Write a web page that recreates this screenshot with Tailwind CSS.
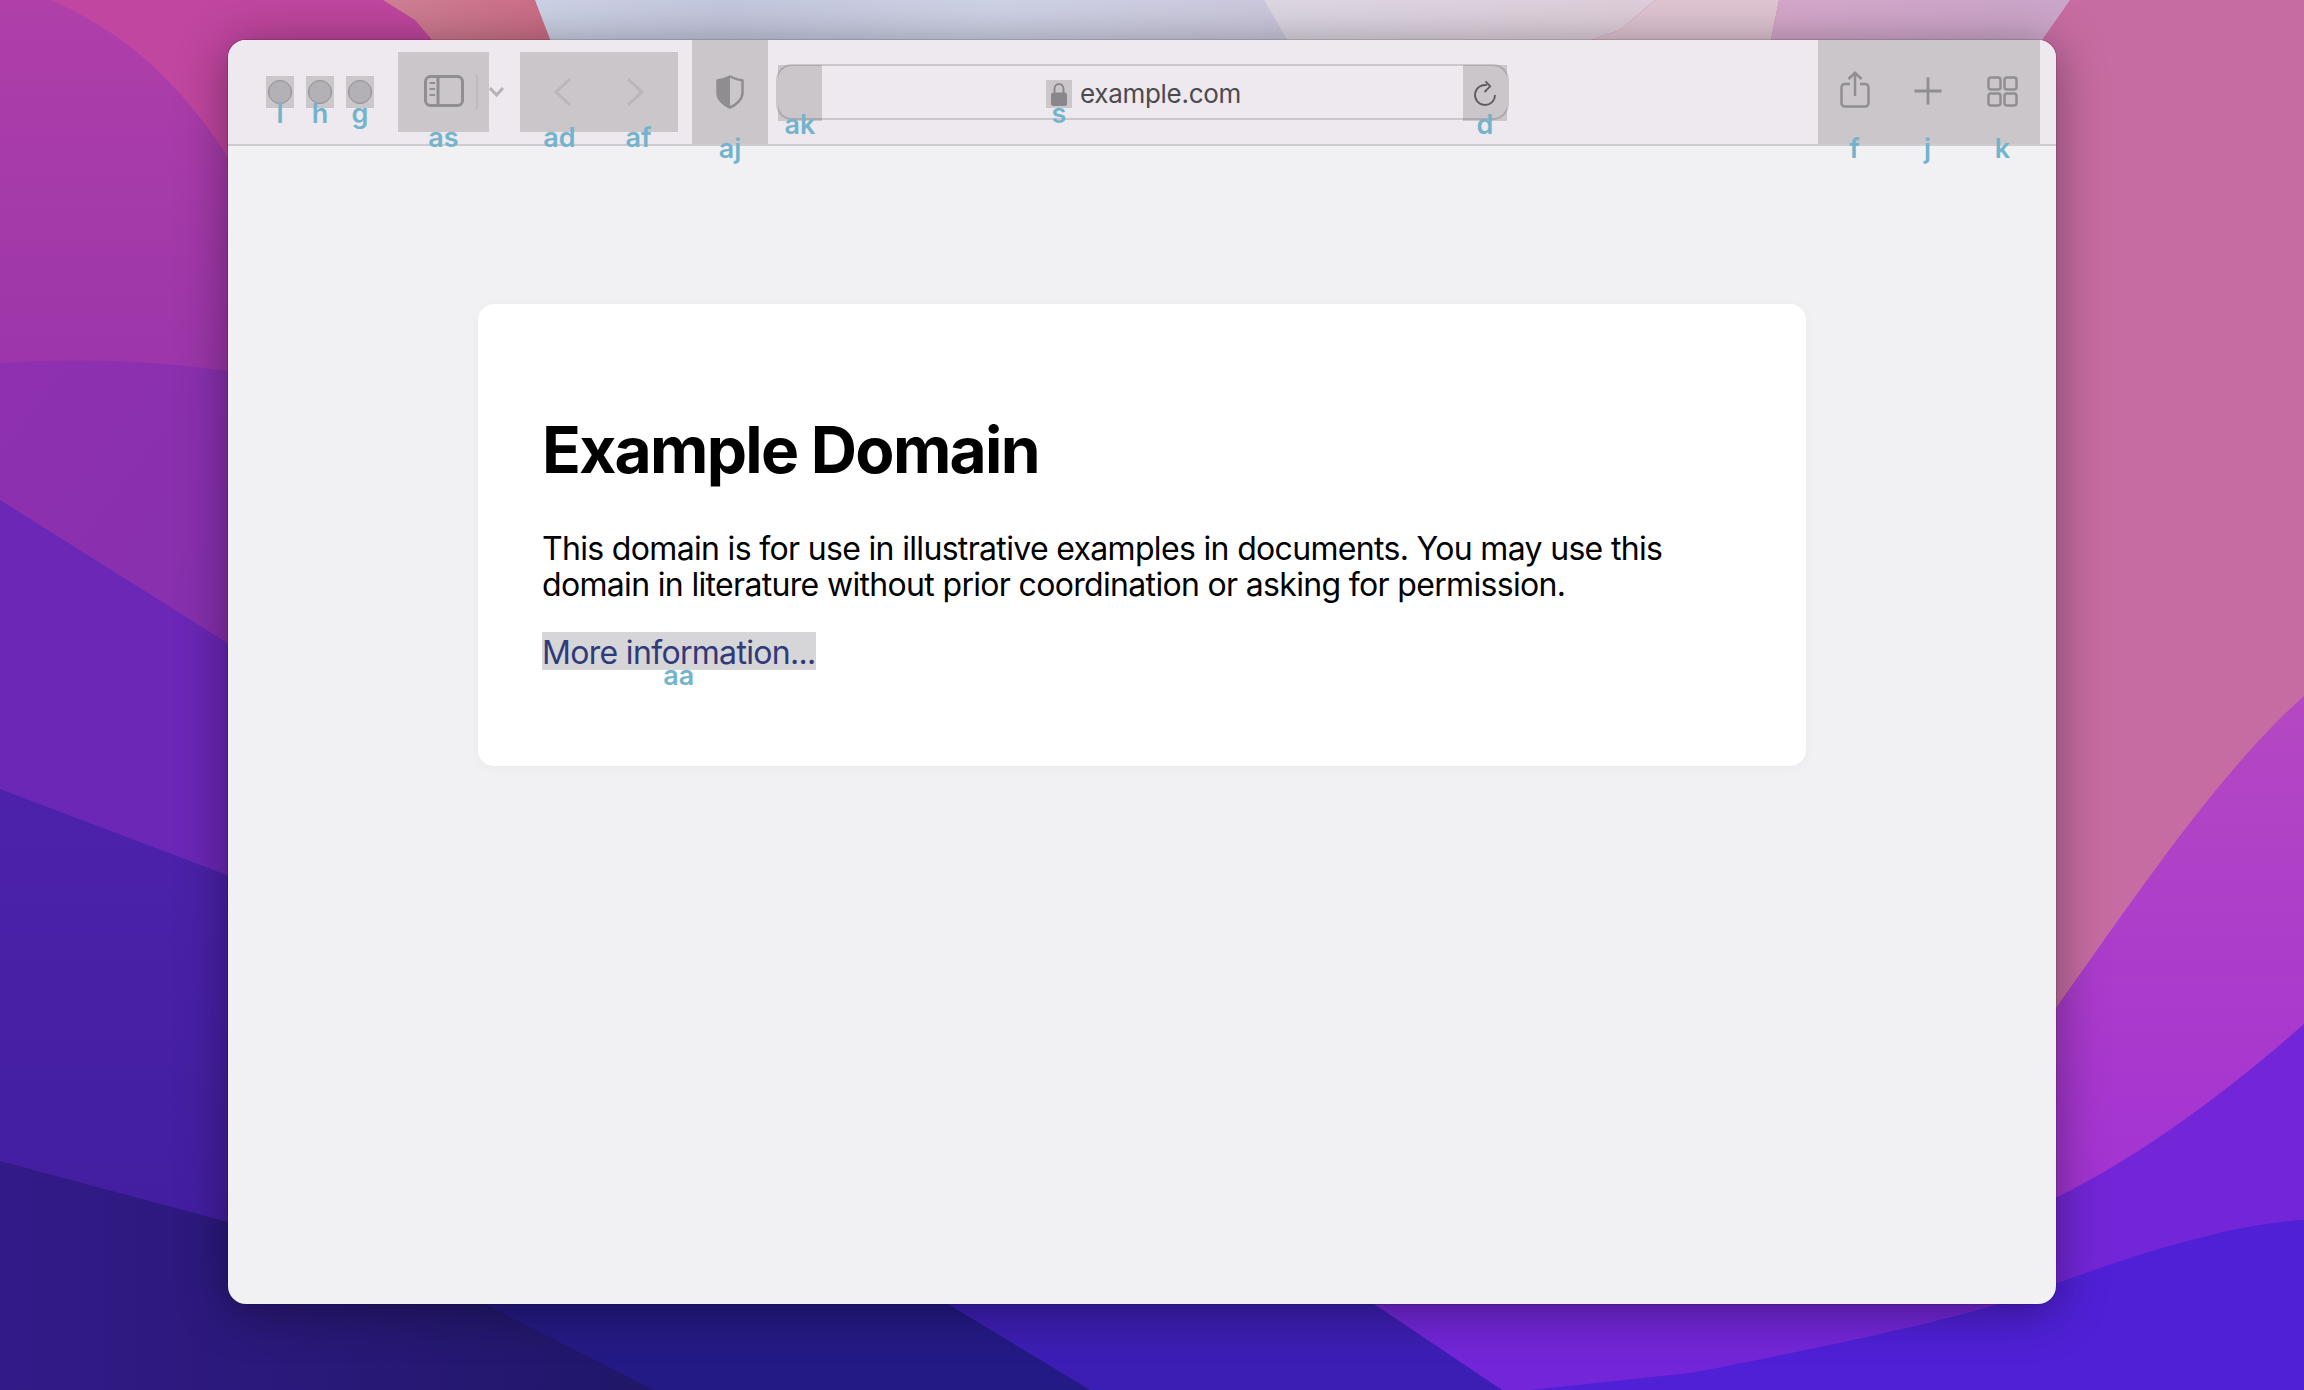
<!DOCTYPE html>
<html>
<head>
<meta charset="utf-8">
<script src="https://cdn.jsdelivr.net/npm/@tailwindcss/browser@4"></script>
</head>
<body class="relative w-[2304px] h-[1390px] overflow-hidden font-['Inter',sans-serif]">
<svg class="absolute inset-0 w-[2304px] h-[1390px]" viewBox="0 0 2304 1390">
  <defs>
    <linearGradient id="b1" x1="0" y1="0" x2="0" y2="1"><stop offset="0" stop-color="#b03fa9"/><stop offset="0.85" stop-color="#9c36aa"/><stop offset="1" stop-color="#9a36ac"/></linearGradient>
    <linearGradient id="b2" x1="0" y1="0" x2="1" y2="1"><stop offset="0" stop-color="#8f30b0"/><stop offset="1" stop-color="#8530ae"/></linearGradient>
    <linearGradient id="b4" x1="0" y1="0" x2="0" y2="1"><stop offset="0" stop-color="#4c22aa"/><stop offset="1" stop-color="#421ea0"/></linearGradient>
    <linearGradient id="b5" x1="0" y1="0" x2="1" y2="0"><stop offset="0" stop-color="#331a88"/><stop offset="1" stop-color="#1f1768"/></linearGradient>
    <linearGradient id="r1" x1="0" y1="0" x2="0" y2="1"><stop offset="0" stop-color="#b548c2"/><stop offset="0.6" stop-color="#a636d0"/><stop offset="1" stop-color="#9830d8"/></linearGradient>
    <linearGradient id="t1" x1="0" y1="0" x2="1" y2="0"><stop offset="0" stop-color="#cdd2e6"/><stop offset="0.25" stop-color="#c4c8df"/><stop offset="0.6" stop-color="#cfd3e6"/><stop offset="1" stop-color="#cdc8dd"/></linearGradient>
    <linearGradient id="t2" x1="0" y1="0" x2="1" y2="0"><stop offset="0" stop-color="#d08095"/><stop offset="1" stop-color="#cb6c85"/></linearGradient>
    <linearGradient id="t3" x1="0" y1="0" x2="1" y2="0"><stop offset="0" stop-color="#ded8e4"/><stop offset="1" stop-color="#dfcedb"/></linearGradient>
    <linearGradient id="t4" x1="0" y1="0" x2="1" y2="0"><stop offset="0" stop-color="#d6a8cb"/><stop offset="1" stop-color="#cba6cb"/></linearGradient>
  </defs>
  <rect width="2304" height="1390" fill="#c76ca2"/>
  <rect width="460" height="400" fill="#c0469f"/>
  <path d="M50 0C100 22 170 60 240 176L240 420L0 420L0 0Z" fill="url(#b1)"/>
  <path d="M0 363C80 358 160 360 240 373L240 680L0 680Z" fill="url(#b2)"/>
  <path d="M0 500L240 651L240 900L0 900Z" fill="#6b27b6"/>
  <path d="M0 789L240 880L240 1240L0 1240Z" fill="url(#b4)"/>
  <path d="M2304 696C2210 780 2120 920 2040 1030L1300 1250L1300 1390L2304 1390Z" fill="url(#r1)"/>
  <path d="M2304 1024C2230 1090 2130 1165 2040 1205L1300 1250L1300 1390L2304 1390Z" fill="#7326d8"/>
  <path d="M800 1200L1340 1200L1374 1304L1502 1390L800 1390Z" fill="#3d1eb4"/>
  <path d="M300 1200L900 1200L948 1304L1090 1390L500 1390Z" fill="#241a85"/>
  <path d="M0 1161L228 1222L485 1304L654 1390L0 1390Z" fill="url(#b5)"/>
  <path d="M2304 1220C2250 1223 2175 1240 2058 1283C2013 1305 1880 1337 1690 1373L1530 1390L2304 1390Z" fill="#4f20d6"/>
  <rect x="535" width="765" height="60" fill="url(#t1)"/>
  <path d="M535 0L383 0L415 20L449 60L558 60Z" fill="url(#t2)"/>
  <path d="M1264 0L1655 0L1620 30L1534 60L1299 60Z" fill="url(#t3)"/>
  <path d="M1655 0L1779 0L1767 60L1534 60L1620 30Z" fill="#e0c5d3"/>
  <path d="M1779 0L2070 0L2028 60L1767 60Z" fill="url(#t4)"/>
</svg>

<div class="relative ml-[228px] mt-[40px] w-[1828px] h-[1264px] float-left rounded-[18px] overflow-hidden bg-[#f1f1f3] shadow-[0_0_0_1px_rgba(0,0,0,0.12),0_6px_50px_rgba(0,0,0,0.4)]">
  <div class="flex items-center h-[106px] bg-[#eee9ee] border-b-2 border-[#cfccd0] pl-[38px] pr-[16px]">
    <div class="flex gap-[12px]">
      <div class="relative w-[28px] h-[32px] bg-black/15 flex items-center justify-center"><span class="w-[24px] h-[24px] rounded-full bg-[#b3b1b5] border border-[#8f8d91]"></span><span class="absolute top-full left-1/2 -translate-x-1/2 -mt-[8px] text-[27px] font-semibold leading-none text-[#74b3cc]">l</span></div>
      <div class="relative w-[28px] h-[32px] bg-black/15 flex items-center justify-center"><span class="w-[24px] h-[24px] rounded-full bg-[#b3b1b5] border border-[#8f8d91]"></span><span class="absolute top-full left-1/2 -translate-x-1/2 -mt-[8px] text-[27px] font-semibold leading-none text-[#74b3cc]">h</span></div>
      <div class="relative w-[28px] h-[32px] bg-black/15 flex items-center justify-center"><span class="w-[24px] h-[24px] rounded-full bg-[#b3b1b5] border border-[#8f8d91]"></span><span class="absolute top-full left-1/2 -translate-x-1/2 -mt-[8px] text-[27px] font-semibold leading-none text-[#74b3cc]">g</span></div>
    </div>

    <div class="relative ml-[24px] w-[91px] h-[80px] bg-black/15">
      <svg class="absolute left-0 top-0" width="91" height="80" viewBox="0 0 91 80" fill="none">
        <rect x="27.500" y="24.500" width="37" height="29" rx="5" stroke="#908e92" stroke-width="3"/>
        <path d="M40 24V54" stroke="#908e92" stroke-width="3"/>
        <path d="M31.500 31H37M31.500 37H37M31.500 43H37" stroke="#908e92" stroke-width="2"/>
        <path d="M79 22V58" stroke="#bebcc0" stroke-width="2"/>
      </svg>
      <span class="absolute top-full left-1/2 -translate-x-1/2 -mt-[8px] text-[27px] font-semibold leading-none text-[#74b3cc]">as</span>
    </div>
    <svg class="shrink-0" width="31" height="14" viewBox="0 0 31 14" fill="none"><path d="M1 3L7.500 10L14 3" stroke="#b5b3b8" stroke-width="3"/></svg>

    <div class="flex w-[158px] h-[80px] bg-black/15">
      <div class="relative flex-1 flex items-center justify-center">
        <svg class="ml-[7px]" width="18" height="30" viewBox="0 0 18 30" fill="none"><path d="M16 2L2 15L16 28" stroke="#b9b7bb" stroke-width="3"/></svg>
        <span class="absolute top-full left-1/2 -translate-x-1/2 -mt-[8px] text-[27px] font-semibold leading-none text-[#74b3cc]">ad</span>
      </div>
      <div class="relative flex-1 flex items-center justify-center">
        <svg class="-ml-[7px]" width="18" height="30" viewBox="0 0 18 30" fill="none"><path d="M2 2L16 15L2 28" stroke="#b9b7bb" stroke-width="3"/></svg>
        <span class="absolute top-full left-1/2 -translate-x-1/2 -mt-[8px] text-[27px] font-semibold leading-none text-[#74b3cc]">af</span>
      </div>
    </div>

    <div class="relative ml-[14px] w-[76px] self-stretch bg-black/15 flex items-center justify-center">
      <svg width="28" height="34" viewBox="0 0 28 34" fill="none">
        <path d="M14 1.500C10 3.500 6 4.800 1.500 5.500V18C1.500 24 7 29.500 14 32.500C21 29.500 26.500 24 26.500 18V5.500C22 4.800 18 3.500 14 1.500Z" stroke="#8f8d92" stroke-width="2.500"/>
        <path d="M14 1.500C10 3.500 6 4.800 1.500 5.500V18C1.500 24 7 29.500 14 32.500Z" fill="#8f8d92"/>
      </svg>
      <span class="absolute top-full left-1/2 -translate-x-1/2 -mt-[9px] text-[27px] font-semibold leading-none text-[#74b3cc]">aj</span>
    </div>

    <div class="relative ml-[8px] w-[733px] h-[56px] rounded-[16px] border-2 border-[#cbc8cc] flex items-center justify-center">
      <div class="absolute left-0 top-[-1px] w-[44px] h-[56px] bg-black/15"><span class="absolute top-full left-1/2 -translate-x-1/2 -mt-[10px] text-[27px] font-semibold leading-none text-[#74b3cc]">ak</span></div>
      <div class="relative ml-[2px] mt-[3px] w-[26px] h-[28px] bg-black/15 flex justify-center shrink-0">
        <svg width="18" height="25" viewBox="0 0 18 25" fill="none" class="mt-[2px]"><path d="M4.500 11V7C4.500 4 6.500 2 9 2C11.500 2 13.500 4 13.500 7V11" stroke="#89878b" stroke-width="2"/><rect x="1" y="10.500" width="16" height="13.500" rx="2.500" fill="#89878b"/></svg>
        <span class="absolute top-full left-1/2 -translate-x-1/2 -mt-[8px] text-[27px] font-semibold leading-none text-[#74b3cc]">s</span>
      </div>
      <span class="ml-[8px] pt-[4px] text-[26px] tracking-[-0.3px] leading-none text-[#4c4a4e]">example.com</span>
      <div class="absolute right-0 top-[-1px] w-[44px] h-[56px] bg-black/15 flex items-center justify-center">
        <svg width="26" height="28" viewBox="0 0 26 28" fill="none" stroke="#5e5c60" stroke-width="1.800"><path d="M15 6.200A10 10 0 1 0 23 16"/><path d="M13.500 2.300L18.200 7.300L12.500 13"/></svg>
        <span class="absolute top-full left-1/2 -translate-x-1/2 -mt-[10px] text-[27px] font-semibold leading-none text-[#74b3cc]">d</span>
      </div>
    </div>

    <div class="flex ml-auto w-[222px] pr-[3px] self-stretch bg-black/15">
      <div class="relative flex-1 flex items-center justify-center">
        <svg class="mb-[4px]" width="30" height="38" viewBox="0 0 30 38" fill="none"><path d="M10 13H5C3 13 1.500 14.500 1.500 16.500V32C1.500 34 3 35.500 5 35.500H25C27 35.500 28.500 34 28.500 32V16.500C28.500 14.500 27 13 25 13H20" stroke="#908e92" stroke-width="2.500"/><path d="M15 25V2M8.500 8L15 1.800L21.500 8" stroke="#908e92" stroke-width="2.500"/></svg>
        <span class="absolute top-full left-1/2 -translate-x-1/2 -mt-[9px] text-[27px] font-semibold leading-none text-[#74b3cc]">f</span>
      </div>
      <div class="relative flex-1 flex items-center justify-center">
        <svg class="mb-[3px]" width="28" height="28" viewBox="0 0 28 28" fill="none"><path d="M14 0.500V27.500M0.500 14H27.500" stroke="#908e92" stroke-width="2.800"/></svg>
        <span class="absolute top-full left-1/2 -translate-x-1/2 -mt-[9px] text-[27px] font-semibold leading-none text-[#74b3cc]">j</span>
      </div>
      <div class="relative flex-1 flex items-center justify-center">
        <svg class="mb-[2px] ml-[3px]" width="31" height="31" viewBox="0 0 31 31" fill="none" stroke="#908e92" stroke-width="2.500"><rect x="1.500" y="1.500" width="12" height="12" rx="2.500"/><rect x="17.500" y="1.500" width="12" height="12" rx="2.500"/><rect x="1.500" y="17.500" width="12" height="12" rx="2.500"/><rect x="17.500" y="17.500" width="12" height="12" rx="2.500"/></svg>
        <span class="absolute top-full left-1/2 -translate-x-1/2 ml-[2px] -mt-[9px] text-[27px] font-semibold leading-none text-[#74b3cc]">k</span>
      </div>
    </div>
  </div>

  <div class="ml-[250px] mt-[158px] w-[1328px] h-[462px] rounded-[16px] bg-white pl-[64px] pt-[107px] shadow-[0_2px_12px_rgba(0,0,0,0.03)]">
    <h1 class="text-[64px] leading-[77px] tracking-[-1.7px] font-bold text-black">Example Domain</h1>
    <p class="mt-[43px] text-[32px] leading-[36px] tracking-[-0.67px] text-black">This domain is for use in illustrative examples in documents. You may use this<br>domain in literature without prior coordination or asking for permission.</p>
    <a class="relative inline-block mt-[29px] h-[38px] bg-[#d6d5d8] text-[32px] leading-[41px] tracking-[-0.68px] text-[#2f3a79]">More information...<span class="absolute top-full left-1/2 -translate-x-1/2 -mt-[8px] text-[27px] font-semibold leading-none tracking-normal text-[#74b3cc]">aa</span></a>
  </div>
</div>
</body>
</html>
